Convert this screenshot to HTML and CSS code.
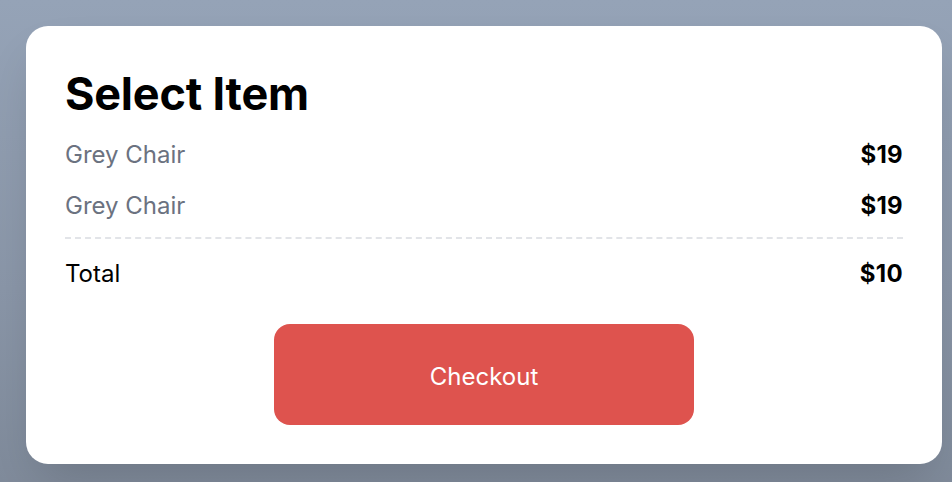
FILE: index.html
```html
<!DOCTYPE html>
<html>
<head>
<meta charset="utf-8">
<link rel="stylesheet" href="styles.css">
</head>
<body>
<div class="card">
  <h1 class="title">Select Item</h1>
  <div class="items">
    <div class="row item"><span class="name">Grey Chair</span><span class="price">$19</span></div>
    <div class="row item"><span class="name">Grey Chair</span><span class="price">$19</span></div>
  </div>
  <div class="divider"></div>
  <div class="row total"><span class="label">Total</span><span class="price">$10</span></div>
  <div class="actions"><button class="checkout">Checkout</button></div>
</div>
</body>
</html>
```
FILE: styles.css
```css
* { box-sizing: border-box; }
html, body { margin: 0; height: 100%; }
body {
  background: linear-gradient(180deg, #95a3b7 0%, #8a96a8 60%, #808b9b 100%);
  font-family: Inter, "Noto Sans", sans-serif;
  padding: 26px 10px 0 26px;
  overflow: hidden;
}
.card {
  width: 916px;
  height: 438px;
  background: #fff;
  border-radius: 22px;
  padding: 40px 39px 39px 39px;
  box-shadow: 0 25px 50px -12px rgba(0,0,0,0.16);
  display: flex;
  flex-direction: column;
}
.title {
  margin: 0;
  font-size: 45px;
  font-weight: 700;
  line-height: 56px;
  color: #000;
  letter-spacing: -0.2px;
}
.items { display: flex; flex-direction: column; margin-top: 7px; }
.row {
  display: flex;
  justify-content: space-between;
  align-items: center;
  font-size: 24px;
}
.item { height: 51px; }
.name { color: #6b7280; }
.price { font-weight: 700; color: #000; letter-spacing: 0.3px; }
.divider {
  margin-top: 6px;
  border-top: 2px dashed #e2e4e8;
}
.total { height: 68px; color: #000; }
.actions {
  display: flex;
  justify-content: center;
  margin-top: auto;
}
.checkout {
  width: 420px;
  height: 101px;
  border: none;
  border-radius: 16px;
  background: #de534e;
  color: #fff;
  font-family: Inter, "Noto Sans", sans-serif;
  font-size: 24px;
  padding: 4px 0 0;
}
```
